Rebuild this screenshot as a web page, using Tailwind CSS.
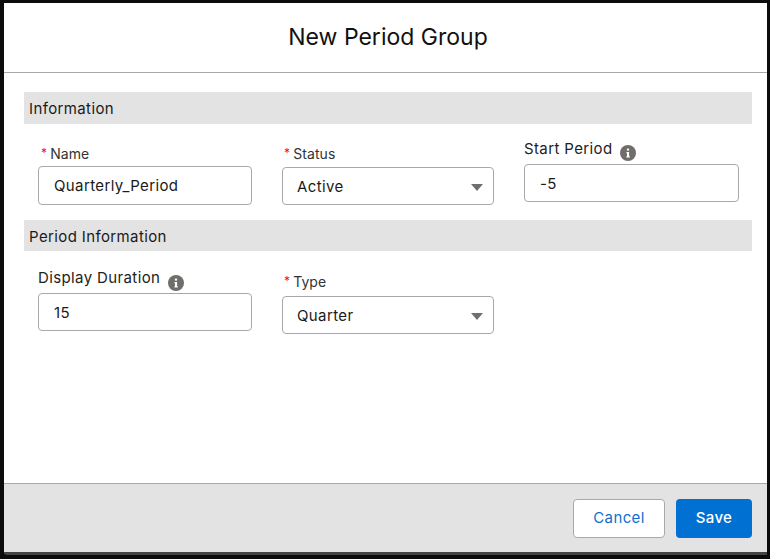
<!DOCTYPE html>
<html lang="en">
<head>
  <meta charset="UTF-8">
  <meta name="viewport" content="width=device-width, initial-scale=1">
  <title>New Period Group</title>
  <script src="https://cdn.jsdelivr.net/npm/@tailwindcss/browser@4"></script>
</head>
<body class="bg-[#0c0c0c] font-['Inter',sans-serif] text-[#1a1a1a] tracking-[0.38px] overflow-hidden">
  <div class="w-[770px] h-[559px] pt-[3px] pl-[4px] pr-[3px]">
    <div class="w-[763px] h-[552px] flex flex-col bg-white border-b-[3px] border-[#444] rounded-bl-[3px]">

      <!-- Header -->
      <div class="h-[70px] shrink-0 flex items-center justify-center border-b border-[#a8a8a8] pl-[5px]">
        <h2 class="text-[23px] text-[#111] tracking-normal">New Period Group</h2>
      </div>

      <!-- Body -->
      <div class="flex-1 pt-[19px] px-[20px]">
        <div class="w-[728px] h-[32px] bg-[#e3e3e3] pl-[5px] pt-[2px] flex items-center text-[15px]">Information</div>

        <div class="flex h-[96px] pl-[14px]">
          <div class="w-[214px] mr-[30px] pt-[20px]">
            <label class="flex items-center h-[18px] ml-[3px] text-[14px] text-[#333] tracking-[0.1px]"><span class="text-[#e8112d] text-[12px] mr-[3px]">*</span>Name</label>
            <input type="text" value="Quarterly_Period" class="mt-[4px] block w-full h-[39px] px-[15px] text-[15px] bg-white border border-[#a9a9a9] rounded-[4px]">
          </div>
          <div class="w-[212px] mr-[30px] pt-[20px]">
            <label class="flex items-center h-[18px] ml-[2px] text-[14px] text-[#333] tracking-[0.1px]"><span class="text-[#e8112d] text-[12px] mr-[3px]">*</span>Status</label>
            <div class="relative mt-[5px] h-[38px] bg-white border border-[#a9a9a9] rounded-[4px] pl-[14px] pt-[2px] flex items-center text-[15px]">
              Active
              <span class="absolute right-[10px] top-[16px] w-0 h-0 border-x-[6px] border-x-transparent border-t-[7px] border-t-[#6f6f6f]"></span>
            </div>
          </div>
          <div class="w-[215px] pt-[16px]">
            <label class="flex items-center h-[18px] text-[15px] text-[#222]">Start Period
              <svg class="ml-[7px] mt-[8px]" width="16" height="16" viewBox="0 0 16 16"><circle cx="8" cy="8" r="8" fill="#706e6b"/><rect x="6.9" y="3.6" width="2.2" height="2" fill="#fff"/><path d="M6.4 7h2.7v4.2h.7v1.2H6.4v-1.2h.6V8.2h-.6z" fill="#fff"/></svg>
            </label>
            <input type="text" value="-5" class="mt-[6px] block w-full h-[38px] px-[15px] text-[15px] bg-white border border-[#a9a9a9] rounded-[4px]">
          </div>
        </div>

        <div class="w-[728px] h-[31px] bg-[#e3e3e3] pl-[5px] pt-[3px] flex items-center text-[15px]">Period Information</div>

        <div class="flex pl-[14px]">
          <div class="w-[214px] mr-[30px] pt-[18px]">
            <label class="flex items-center h-[18px] text-[15px] text-[#222]">Display Duration
              <svg class="ml-[8px] mt-[10px]" width="16" height="16" viewBox="0 0 16 16"><circle cx="8" cy="8" r="8" fill="#706e6b"/><rect x="6.9" y="3.6" width="2.2" height="2" fill="#fff"/><path d="M6.4 7h2.7v4.2h.7v1.2H6.4v-1.2h.6V8.2h-.6z" fill="#fff"/></svg>
            </label>
            <input type="text" value="15" class="mt-[6px] block w-full h-[38px] px-[15px] text-[15px] bg-white border border-[#a9a9a9] rounded-[4px]">
          </div>
          <div class="w-[212px] pt-[21px]">
            <label class="flex items-center h-[18px] ml-[2px] text-[14px] text-[#333] tracking-[0.1px]"><span class="text-[#e8112d] text-[12px] mr-[3px]">*</span>Type</label>
            <div class="relative mt-[6px] h-[38px] bg-white border border-[#a9a9a9] rounded-[4px] pl-[14px] pt-[2px] flex items-center text-[15px]">
              Quarter
              <span class="absolute right-[10px] top-[16px] w-0 h-0 border-x-[6px] border-x-transparent border-t-[7px] border-t-[#6f6f6f]"></span>
            </div>
          </div>
        </div>
      </div>

      <!-- Footer -->
      <div class="h-[69px] shrink-0 bg-[#e3e3e3] border-t border-[#a8a8a8] flex items-start justify-end gap-[11px] pt-[15px] pr-[15px]">
        <button class="w-[92px] h-[39px] bg-white border border-[#a9a9a9] rounded-[4px] text-[15px] text-[#0f6fd1]">Cancel</button>
        <button class="w-[76px] h-[39px] bg-[#0070d2] rounded-[4px] text-[15px] font-medium text-white">Save</button>
      </div>
    </div>
  </div>
</body>
</html>
